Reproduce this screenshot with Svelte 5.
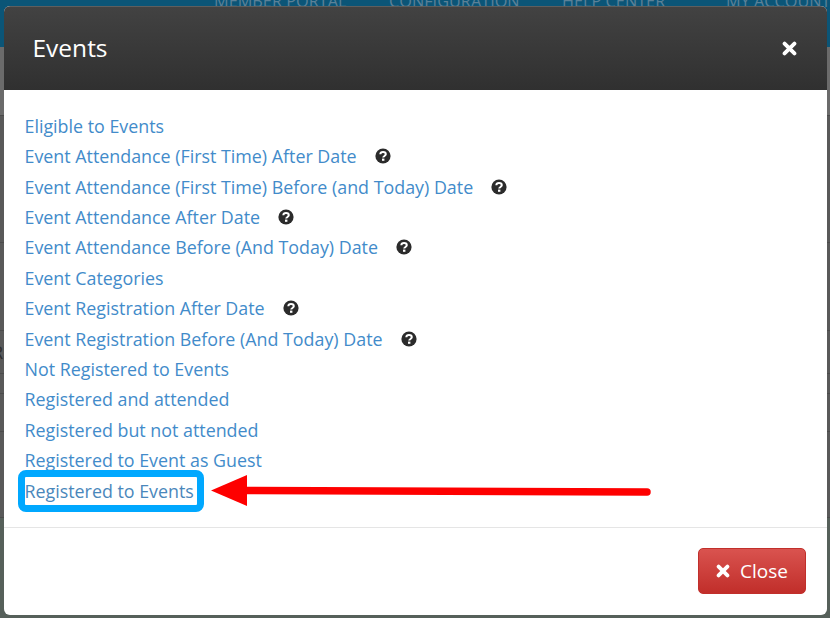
<script>
  const navItems = [
    { label: 'MEMBER PORTAL', width: 175 },
    { label: 'CONFIGURATION', width: 173 },
    { label: 'HELP CENTER', width: 164 },
    { label: 'MY ACCOUNT', width: 110 }
  ];

  const links = [
    { label: 'Eligible to Events' },
    { label: 'Event Attendance (First Time) After Date', help: true },
    { label: 'Event Attendance (First Time) Before (and Today) Date', help: true },
    { label: 'Event Attendance After Date', help: true },
    { label: 'Event Attendance Before (And Today) Date', help: true },
    { label: 'Event Categories' },
    { label: 'Event Registration After Date', help: true },
    { label: 'Event Registration Before (And Today) Date', help: true },
    { label: 'Not Registered to Events' },
    { label: 'Registered and attended' },
    { label: 'Registered but not attended' },
    { label: 'Registered to Event as Guest' },
    { label: 'Registered to Events', marked: true }
  ];

  // table rows showing behind the dimmed backdrop
  const bands = [
    { height: 69 },
    { height: 127 },
    { height: 88 },
    { height: 43, text: 'R' },
    { height: 20 },
    { height: 38, text: 'i' },
    { height: 86 }
  ];
</script>

<div class="page">
  <nav class="topbar">
    {#each navItems as item}
      <span style="width: {item.width}px">{item.label}</span>
    {/each}
  </nav>
  {#each bands as band}
    <div class="band" style="height: {band.height}px">
      {#if band.text}<span>{band.text}</span>{/if}
    </div>
  {/each}
  <div class="bottom"></div>
</div>

<div class="modal">
  <header>
    <h4>Events</h4>
    <svg class="x" viewBox="0 0 14 14" width="15" height="15" aria-hidden="true">
      <path d="M2.4 2.4 11.6 11.6M11.6 2.4 2.4 11.6" stroke="#fff" stroke-width="3.6" stroke-linecap="round" />
    </svg>
  </header>

  <div class="body">
    {#each links as link}
      <div class="row">
        <a href="#top" class:marked={link.marked}>{link.label}</a>
        {#if link.help}
          <svg class="help" viewBox="0 0 16 16" width="16" height="16" aria-hidden="true">
            <circle cx="8" cy="8" r="7.6" fill="#2b2b2b" />
            <path d="M5.3 6.3C5.4 4.9 6.5 4.1 8 4.1 9.6 4.1 10.8 5 10.8 6.3 10.8 8 8.2 8 8.2 9.6" fill="none" stroke="#fff" stroke-width="2" />
            <rect x="7" y="10.6" width="2.4" height="2.2" fill="#fff" />
          </svg>
        {/if}
      </div>
    {/each}
    <svg class="arrow" viewBox="0 0 445 34" width="445" height="34" aria-hidden="true">
      <path d="M36 16.5 437 18" stroke="#fe0000" stroke-width="7.5" stroke-linecap="round" />
      <path d="M1 16.5 37 1V32Z" fill="#fe0000" />
    </svg>
  </div>

  <footer>
    <button type="button">
      <svg viewBox="0 0 14 14" width="14" height="14" aria-hidden="true">
        <path d="M2.6 2.6 11.4 11.4M11.4 2.6 2.6 11.4" stroke="#fff" stroke-width="3.8" stroke-linecap="round" />
      </svg>
      Close
    </button>
  </footer>
</div>

<style>
  :global(body) {
    margin: 0;
    background: #595959;
    font-family: 'Open Sans', sans-serif;
    overflow: hidden;
  }

  .page {
    height: 618px;
    overflow: hidden;
    background: #595959;
  }

  .topbar {
    display: flex;
    height: 47px;
    padding-left: 214px;
    background: #0b5577;
    color: #5b8197;
    font-size: 16.3px;
    line-height: 16px;
    overflow: hidden;
    white-space: nowrap;
    box-sizing: border-box;
  }

  .topbar span {
    display: block;
    margin-top: -7px;
    flex: none;
  }

  .band {
    display: flex;
    align-items: center;
    box-sizing: border-box;
    border-bottom: 1px solid #4b4b4b;
    color: #2f2f2f;
    font-size: 18px;
  }

  .band span {
    margin-left: -8px;
  }

  .band:first-of-type {
    background: #6b6b6b;
  }

  .bottom {
    height: 148px;
    background: #56605a;
  }

  .modal {
    position: absolute;
    left: 4px;
    top: 6px;
    width: 823px;
    height: 609px;
    display: flex;
    flex-direction: column;
    background: #fff;
    border-radius: 6px;
    overflow: hidden;
  }

  header {
    flex: none;
    height: 84px;
    padding: 0 29px 0 28.5px;
    display: flex;
    align-items: center;
    justify-content: space-between;
    box-sizing: border-box;
    border-top: 1px solid #5e5e5e;
    background: linear-gradient(#424242, #303030);
  }

  h4 {
    margin: -2px 0 0;
    color: #fff;
    font-size: 24.5px;
    font-weight: 400;
  }

  .x {
    margin: -1px 1px 0 0;
  }

  .body {
    position: relative;
    flex: none;
    height: 438px;
    padding: 20.7px 21px 0 20.5px;
    box-sizing: border-box;
    border-bottom: 1px solid #e5e5e5;
  }

  .row {
    display: flex;
    align-items: center;
    height: 30.4px;
    font-size: 17.85px;
  }

  a {
    color: #428bca;
    text-decoration: none;
  }

  a.marked {
    color: #4a87bb;
    outline: 7px solid #00a8ff;
    border-radius: 1px;
    line-height: 28px;
    padding-right: 3px;
  }

  .help {
    margin-left: 18px;
    flex: none;
  }

  .arrow {
    position: absolute;
    left: 206px;
    top: 384px;
  }

  footer {
    flex: 1;
    display: flex;
    justify-content: flex-end;
    align-items: flex-start;
    padding: 20px 21px 0;
  }

  button {
    display: flex;
    align-items: center;
    gap: 10px;
    width: 108px;
    height: 46px;
    padding: 0 0 0 17px;
    box-sizing: border-box;
    border: 1px solid #c12f2b;
    border-radius: 5px;
    background: linear-gradient(#d9534f, #c12e2a);
    color: #fff;
    font: inherit;
    font-size: 19px;
  }
</style>
